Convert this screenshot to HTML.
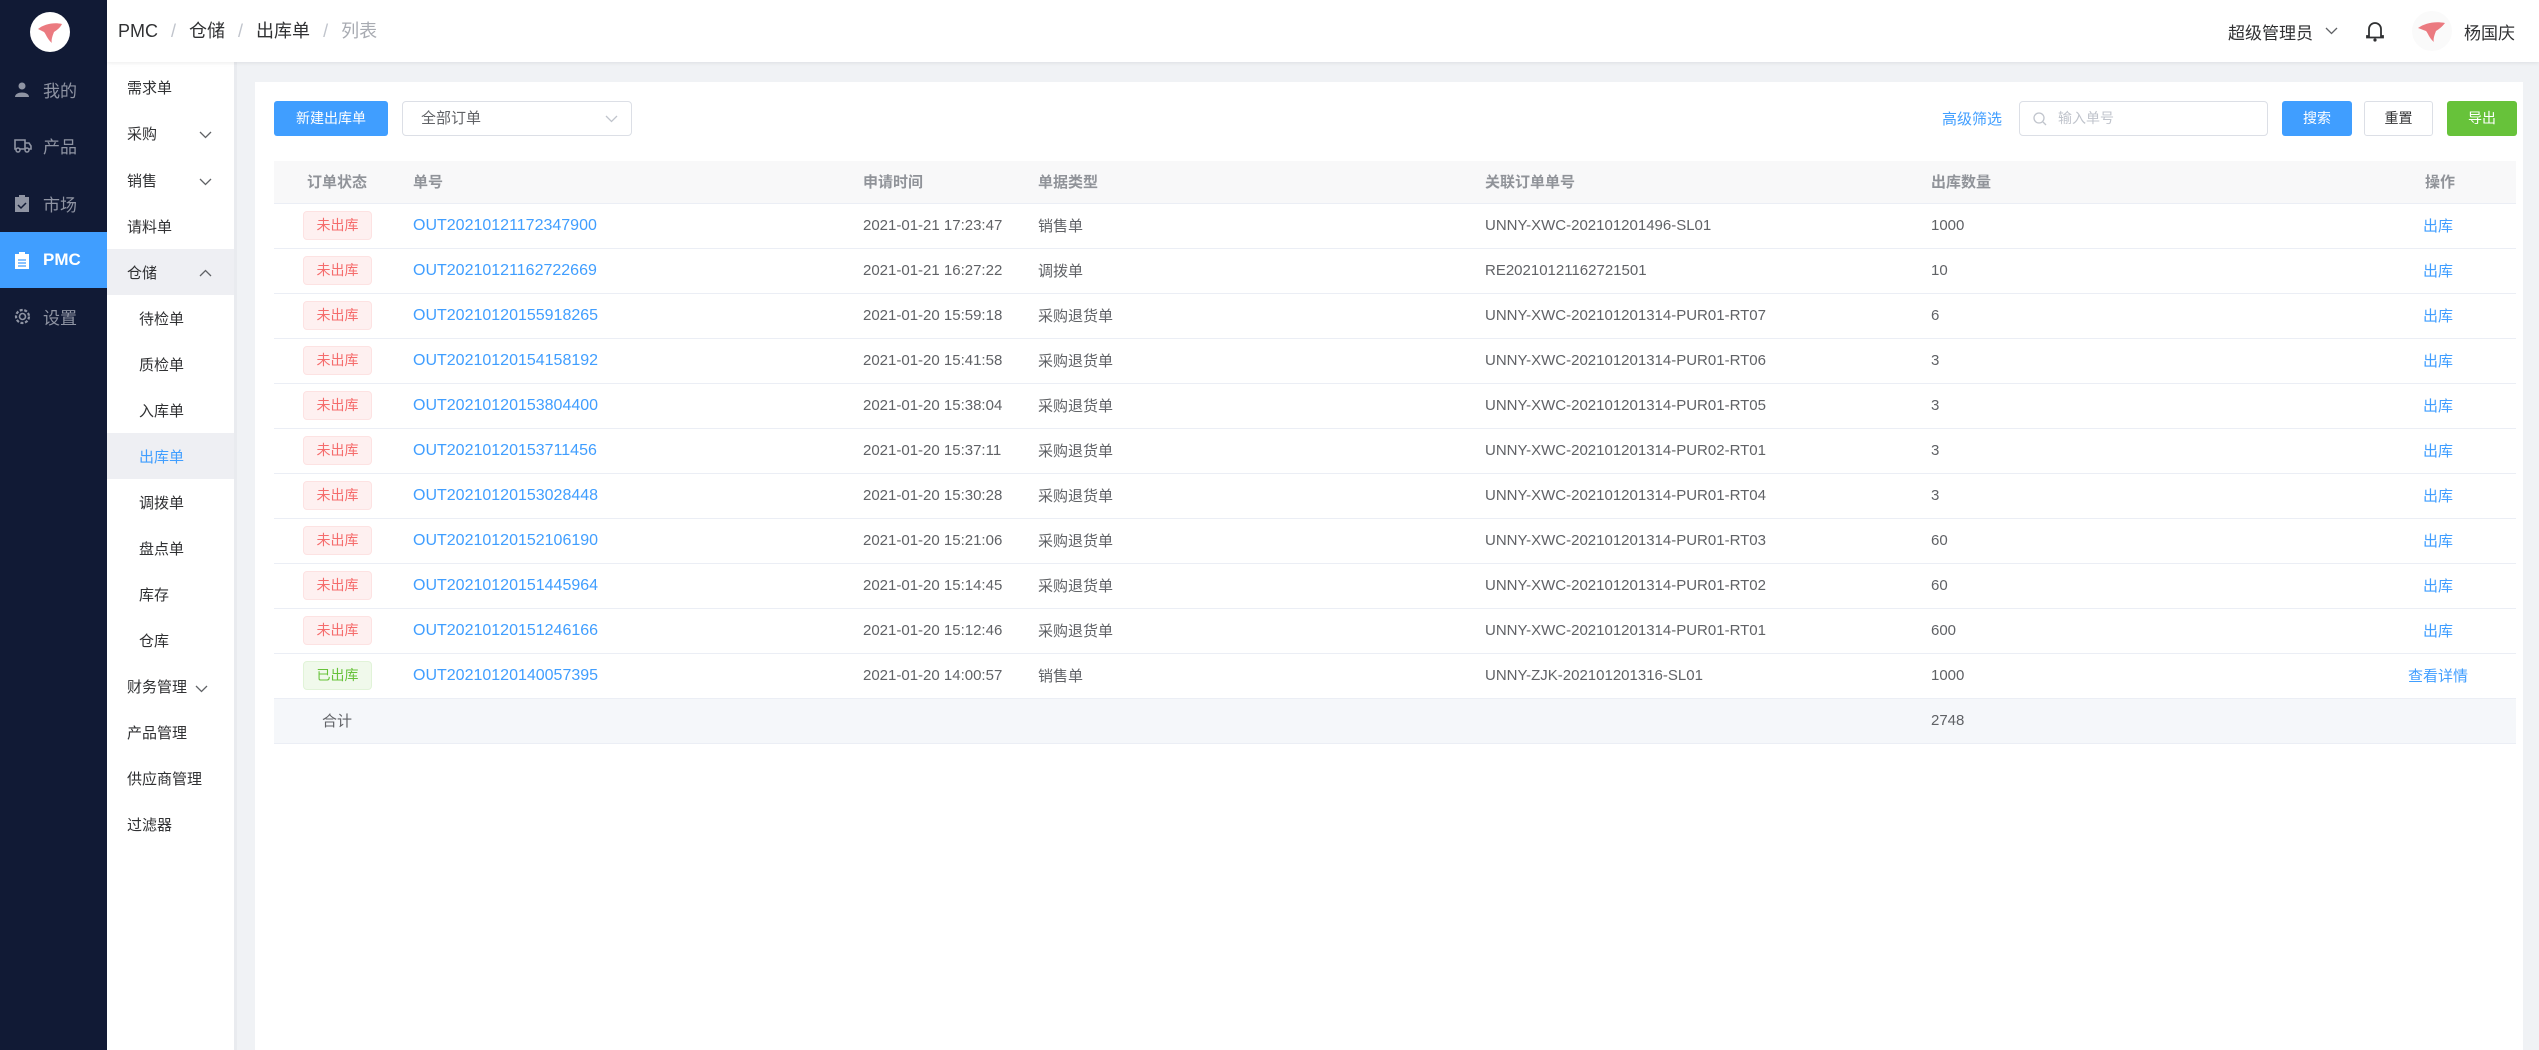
<!DOCTYPE html>
<html><head><meta charset="utf-8"><style>
*{margin:0;padding:0;box-sizing:border-box}
body{width:2539px;height:1050px;overflow:hidden;background:#f0f2f5;font-family:"Liberation Sans","Noto Sans CJK SC",sans-serif;position:relative;color:#606266}
.abs{position:absolute}
#side{left:0;top:0;width:107px;height:1050px;background:#111a35}
.mi{position:absolute;left:0;width:107px;height:56px;display:flex;align-items:center;color:#8f94a3;font-size:17px}
.mi svg{position:absolute;left:14px}
.mi span{position:absolute;left:43px}
#hdr{left:107px;top:0;width:2432px;height:62px;background:#fff;box-shadow:0 1px 4px rgba(0,0,0,.08);z-index:2}
#side2{left:107px;top:62px;width:130px;height:988px;background:#fff;border-right:3px solid #e9ebef}
.si{position:absolute;left:0;width:127px;height:46px;line-height:46px;font-size:15px;color:#303133}
.si.top{padding-left:20px}.si.sub{padding-left:32px}
.chev{position:absolute;left:92px;top:19px}
#card{left:255px;top:82px;width:2268px;height:968px;background:#fff}
.btn{position:absolute;height:35px;line-height:35px;text-align:center;font-size:14px;border-radius:3px}
table{position:absolute;left:274px;top:161px;width:2242px;border-collapse:collapse;font-size:15px}
td,th{padding:0;text-align:left;border-bottom:1px solid #ebeef5;white-space:nowrap}
th{height:42px;background:#f8f8f9;color:#909399;font-weight:bold;font-size:15px}
td{height:45px;color:#606266}
.tag{display:inline-block;width:69px;height:29px;line-height:27px;text-align:center;border-radius:4px;font-size:14px;border:1px solid #fde2e2;background:#fef0f0;color:#f56c6c;margin-left:29px}
.tag.g{border-color:#e1f3d8;background:#f0f9eb;color:#67c23a}
.lk{color:#409eff;font-size:16px}
.op{color:#409eff}
tr.tot td{background:#f5f7fa}
</style></head><body>
<div id="side" class="abs">
 <div class="abs" style="left:30px;top:12px;width:40px;height:40px;border-radius:50%;background:#fff;overflow:hidden">
  <svg width="40" height="40"><path d="M8 17 C14 12 24 10 32 12 C30 16 27 18 24 20 C22 25 21 29 22 31 C17 27 16 22 14 20 C12 19 10 18 8 17Z" fill="#e8636a" opacity=".85"/></svg>
 </div>
 <div class="mi" style="top:61px"><svg width="16" height="16" viewBox="0 0 16 16"><circle cx="8" cy="5" r="3.5" fill="#8f94a3"/><path d="M1 16 C1 10 15 10 15 16Z" fill="#8f94a3"/></svg><span>我的</span></div>
 <div class="mi" style="top:117px"><svg width="18" height="16" viewBox="0 0 18 16"><path d="M1 3h10v9H1zM11 6h4l2 3v3h-6" fill="none" stroke="#8f94a3" stroke-width="1.6"/><circle cx="4" cy="13" r="2" fill="#111a35" stroke="#8f94a3" stroke-width="1.5"/><circle cx="13" cy="13" r="2" fill="#111a35" stroke="#8f94a3" stroke-width="1.5"/></svg><span>产品</span></div>
 <div class="mi" style="top:175px"><svg width="16" height="17" viewBox="0 0 16 17"><rect x="1" y="2" width="14" height="15" fill="#8f94a3"/><rect x="5" y="0" width="6" height="3" fill="#8f94a3"/><path d="M4 10l3 3 5-5" stroke="#111a35" stroke-width="1.5" fill="none"/></svg><span>市场</span></div>
 <div class="mi" style="top:232px;background:#409eff;color:#fff;font-weight:bold"><svg width="16" height="17" viewBox="0 0 16 17"><rect x="1" y="2" width="14" height="15" fill="#fff"/><rect x="5" y="0" width="6" height="3" fill="#fff"/><path d="M4 8h8M4 11h8M4 14h8" stroke="#409eff" stroke-width="1.3"/></svg><span>PMC</span></div>
 <div class="mi" style="top:288px"><svg width="17" height="17" viewBox="0 0 17 17"><circle cx="8.5" cy="8.5" r="6.5" fill="none" stroke="#8f94a3" stroke-width="2.2" stroke-dasharray="3 1.6"/><circle cx="8.5" cy="8.5" r="3" fill="none" stroke="#8f94a3" stroke-width="1.6"/></svg><span>设置</span></div>
</div>
<div id="hdr" class="abs">
 <div class="abs" style="left:11px;top:17px;font-size:18px;color:#303133;white-space:nowrap">PMC <span style="color:#c0c4cc;margin:0 8px">/</span> 仓储 <span style="color:#c0c4cc;margin:0 8px">/</span> 出库单 <span style="color:#c0c4cc;margin:0 8px">/</span> <span style="color:#a8abb2">列表</span></div>
 <div class="abs" style="left:2121px;top:19px;font-size:17px;color:#303133">超级管理员</div>
 <svg class="abs" style="left:2218px;top:27px" width="13" height="8"><path d="M1 1l5.5 5.5L12 1" fill="none" stroke="#606266" stroke-width="1.3"/></svg>
 <svg class="abs" style="left:2259px;top:20px" width="18" height="22" viewBox="0 0 18 22"><path d="M3 16V9a6 6 0 0 1 12 0v7h2v1.5H1V16z" fill="none" stroke="#303133" stroke-width="1.8"/><circle cx="9" cy="20" r="1.6" fill="#303133"/></svg>
 <div class="abs" style="left:2305px;top:11px;width:40px;height:40px;border-radius:50%;background:#fafafa;overflow:hidden"><svg width="40" height="40"><path d="M6 17 C13 12 23 10 33 12 C30 16 27 18 24 20 C22 25 21 29 22 31 C17 27 16 22 14 20 C11 19 9 18 6 17Z" fill="#e8636a" opacity=".85"/></svg></div>
 <div class="abs" style="left:2357px;top:19px;font-size:17px;color:#303133">杨国庆</div>
</div>
<div id="side2" class="abs">
 <div class="si top" style="top:4px">需求单</div>
 <div class="si top" style="top:50px">采购<svg class="chev" width="13" height="8"><path d="M1 1l5.5 5.5L12 1" fill="none" stroke="#606266" stroke-width="1.3"/></svg></div>
 <div class="si top" style="top:97px">销售<svg class="chev" width="13" height="8"><path d="M1 1l5.5 5.5L12 1" fill="none" stroke="#606266" stroke-width="1.3"/></svg></div>
 <div class="si top" style="top:143px">请料单</div>
 <div class="si top" style="top:187px;background:#eeeff3;line-height:50px">仓储<svg class="chev" width="13" height="8" style="top:20px"><path d="M1 7l5.5-5.5L12 7" fill="none" stroke="#606266" stroke-width="1.3"/></svg></div>
 <div class="si sub" style="top:235px">待检单</div>
 <div class="si sub" style="top:281px">质检单</div>
 <div class="si sub" style="top:327px">入库单</div>
 <div class="si sub" style="top:371px;background:#eeeff3;color:#409eff;line-height:50px">出库单</div>
 <div class="si sub" style="top:419px">调拨单</div>
 <div class="si sub" style="top:465px">盘点单</div>
 <div class="si sub" style="top:511px">库存</div>
 <div class="si sub" style="top:557px">仓库</div>
 <div class="si top" style="top:603px">财务管理<svg class="abs" style="left:88px;top:20px" width="13" height="8"><path d="M1 1l5.5 5.5L12 1" fill="none" stroke="#606266" stroke-width="1.3"/></svg></div>
 <div class="si top" style="top:649px">产品管理</div>
 <div class="si top" style="top:695px">供应商管理</div>
 <div class="si top" style="top:741px">过滤器</div>
</div>
<div id="card" class="abs"></div>
<div class="btn" style="left:274px;top:101px;width:114px;background:#409eff;color:#fff">新建出库单</div>
<div class="abs" style="left:402px;top:101px;width:230px;height:35px;border:1px solid #dcdfe6;border-radius:4px;font-size:15px;line-height:33px;padding-left:18px;color:#606266">全部订单<svg class="abs" style="left:202px;top:13px" width="13" height="8"><path d="M1 1l5.5 5.5L12 1" fill="none" stroke="#c0c4cc" stroke-width="1.3"/></svg></div>
<div class="abs" style="left:1942px;top:108px;font-size:15px;color:#409eff">高级筛选</div>
<div class="abs" style="left:2019px;top:101px;width:249px;height:35px;border:1px solid #dcdfe6;border-radius:4px;font-size:14px;line-height:33px;padding-left:38px;color:#c0c4cc">输入单号<svg class="abs" style="left:13px;top:10px" width="14" height="14"><circle cx="6" cy="6" r="5" fill="none" stroke="#c0c4cc" stroke-width="1.3"/><path d="M10 10l3 3" stroke="#c0c4cc" stroke-width="1.3"/></svg></div>
<div class="btn" style="left:2282px;top:101px;width:70px;background:#409eff;color:#fff">搜索</div>
<div class="btn" style="left:2364px;top:101px;width:69px;border:1px solid #dcdfe6;color:#303133;line-height:33px">重置</div>
<div class="btn" style="left:2447px;top:101px;width:70px;background:#67c23a;color:#fff">导出</div>
<table>
<colgroup><col style="width:139px"><col style="width:450px"><col style="width:175px"><col style="width:447px"><col style="width:446px"><col style="width:492px"><col></colgroup>
<tr><th style="padding-left:33px">订单状态</th><th>单号</th><th>申请时间</th><th>单据类型</th><th>关联订单单号</th><th>出库数量</th><th style="padding-left:2px">操作</th></tr>
<tr><td><span class="tag">未出库</span></td><td class="lk">OUT20210121172347900</td><td>2021-01-21 17:23:47</td><td>销售单</td><td>UNNY-XWC-202101201496-SL01</td><td>1000</td><td class="op">出库</td></tr>
<tr><td><span class="tag">未出库</span></td><td class="lk">OUT20210121162722669</td><td>2021-01-21 16:27:22</td><td>调拨单</td><td>RE20210121162721501</td><td>10</td><td class="op">出库</td></tr>
<tr><td><span class="tag">未出库</span></td><td class="lk">OUT20210120155918265</td><td>2021-01-20 15:59:18</td><td>采购退货单</td><td>UNNY-XWC-202101201314-PUR01-RT07</td><td>6</td><td class="op">出库</td></tr>
<tr><td><span class="tag">未出库</span></td><td class="lk">OUT20210120154158192</td><td>2021-01-20 15:41:58</td><td>采购退货单</td><td>UNNY-XWC-202101201314-PUR01-RT06</td><td>3</td><td class="op">出库</td></tr>
<tr><td><span class="tag">未出库</span></td><td class="lk">OUT20210120153804400</td><td>2021-01-20 15:38:04</td><td>采购退货单</td><td>UNNY-XWC-202101201314-PUR01-RT05</td><td>3</td><td class="op">出库</td></tr>
<tr><td><span class="tag">未出库</span></td><td class="lk">OUT20210120153711456</td><td>2021-01-20 15:37:11</td><td>采购退货单</td><td>UNNY-XWC-202101201314-PUR02-RT01</td><td>3</td><td class="op">出库</td></tr>
<tr><td><span class="tag">未出库</span></td><td class="lk">OUT20210120153028448</td><td>2021-01-20 15:30:28</td><td>采购退货单</td><td>UNNY-XWC-202101201314-PUR01-RT04</td><td>3</td><td class="op">出库</td></tr>
<tr><td><span class="tag">未出库</span></td><td class="lk">OUT20210120152106190</td><td>2021-01-20 15:21:06</td><td>采购退货单</td><td>UNNY-XWC-202101201314-PUR01-RT03</td><td>60</td><td class="op">出库</td></tr>
<tr><td><span class="tag">未出库</span></td><td class="lk">OUT20210120151445964</td><td>2021-01-20 15:14:45</td><td>采购退货单</td><td>UNNY-XWC-202101201314-PUR01-RT02</td><td>60</td><td class="op">出库</td></tr>
<tr><td><span class="tag">未出库</span></td><td class="lk">OUT20210120151246166</td><td>2021-01-20 15:12:46</td><td>采购退货单</td><td>UNNY-XWC-202101201314-PUR01-RT01</td><td>600</td><td class="op">出库</td></tr>
<tr><td><span class="tag g">已出库</span></td><td class="lk">OUT20210120140057395</td><td>2021-01-20 14:00:57</td><td>销售单</td><td>UNNY-ZJK-202101201316-SL01</td><td>1000</td><td class="op" style="position:relative;left:-15px">查看详情</td></tr>
<tr class="tot"><td style="padding-left:48px">合计</td><td></td><td></td><td></td><td></td><td>2748</td><td></td></tr>
</table>
</body></html>
